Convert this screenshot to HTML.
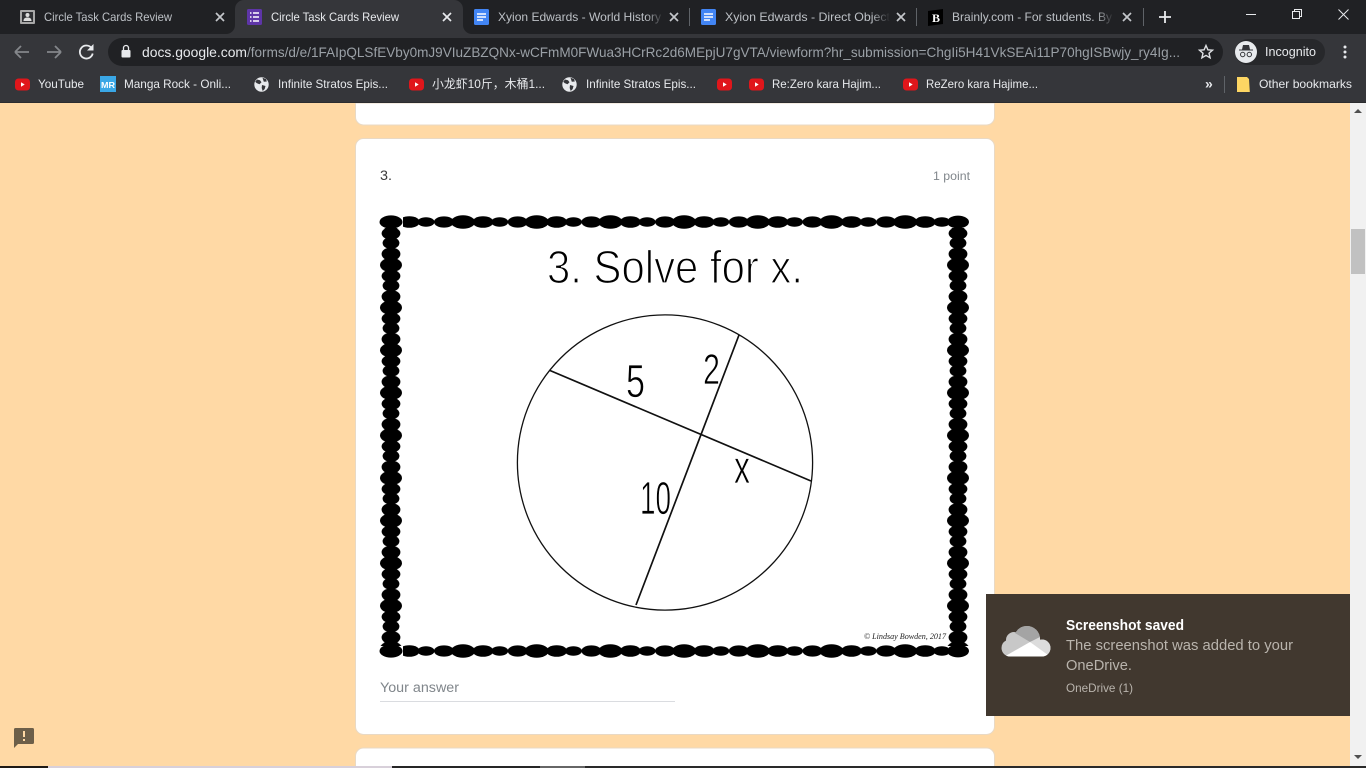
<!DOCTYPE html>
<html lang="en">
<head>
<meta charset="utf-8">
<title>Circle Task Cards Review</title>
<style>
html,body{margin:0;padding:0;width:1366px;height:768px;overflow:hidden;background:#ffd9a5}
svg{display:block;position:absolute;left:0;top:0}
text{font-family:"Liberation Sans","Noto Sans CJK SC",sans-serif;white-space:pre}
.t{font-size:12px;fill:#bdc1c6}
.a{fill:#e8eaed}
.b{font-size:12px;fill:#e8eaed}
.x{stroke:#c4c7cb;stroke-width:1.7;fill:none}
.ax{stroke:#e8eaed}
.w{stroke:#e8eaed;stroke-width:1;fill:none}
</style>
</head>
<body>
<svg width="1366" height="768" viewBox="0 0 1366 768" xmlns="http://www.w3.org/2000/svg">
<defs>
  <g id="yt"><rect x="0" y="0.500" width="15" height="12" rx="3.500" fill="#e0161b"/><path d="M6 4.300v4.400l3.700-2.200z" fill="#fff"/></g>
  <g id="globe"><circle cx="7.500" cy="7.500" r="7.200" fill="#e8eaed"/><path d="M3 2.500l3 .8 1.500 2-2 2-2.800-1.200-1.500-1.300zM8 8l3.500 1-.8 3-2 2-1-3zM8.500 .8l3.500 1.200.8 2.500-3 .3z" fill="#35363a"/></g>
  <g id="doc"><rect x="0" y="0" width="15" height="16" rx="1.500" fill="#4285f4"/><path d="M3 5h9M3 8h9M3 11h6" stroke="#fff" stroke-width="1.400"/></g>
  <pattern id="ph" patternUnits="userSpaceOnUse" x="426" y="0" width="73.7" height="768">
    <ellipse cx="0" cy="222" rx="8.500" ry="4.700"/><ellipse cx="73.7" cy="222" rx="8.500" ry="4.700"/>
    <ellipse cx="18" cy="222" rx="10" ry="5.600"/>
    <ellipse cx="37" cy="222" rx="12" ry="6.800"/>
    <ellipse cx="57" cy="222" rx="10.400" ry="5.800"/>
    <ellipse cx="0" cy="651" rx="8.500" ry="4.700"/><ellipse cx="73.7" cy="651" rx="8.500" ry="4.700"/>
    <ellipse cx="18" cy="651" rx="10" ry="5.600"/>
    <ellipse cx="37" cy="651" rx="12" ry="6.800"/>
    <ellipse cx="57" cy="651" rx="10.400" ry="5.800"/>
  </pattern>
  <pattern id="pv" patternUnits="userSpaceOnUse" x="0" y="243" width="1366" height="42.6">
    <ellipse cx="391" cy="0" rx="8.400" ry="6"/><ellipse cx="391" cy="42.6" rx="8.400" ry="6"/>
    <ellipse cx="391" cy="11" rx="9.400" ry="6.600"/>
    <ellipse cx="391" cy="22" rx="11" ry="7.200"/>
    <ellipse cx="391" cy="33" rx="9.400" ry="6.300"/>
    <ellipse cx="958" cy="0" rx="8.400" ry="6"/><ellipse cx="958" cy="42.6" rx="8.400" ry="6"/>
    <ellipse cx="958" cy="11" rx="9.400" ry="6.600"/>
    <ellipse cx="958" cy="22" rx="11" ry="7.200"/>
    <ellipse cx="958" cy="33" rx="9.400" ry="6.300"/>
  </pattern>
  <linearGradient id="fade"><stop offset="0" stop-color="#202124" stop-opacity="0"/><stop offset="1" stop-color="#202124"/></linearGradient>
  <clipPath id="cloud">
    <circle cx="1027" cy="639" r="13"/>
    <circle cx="1010" cy="648" r="8.500"/>
    <circle cx="1042" cy="648" r="8.500"/>
    <circle cx="1014" cy="640" r="8"/>
    <rect x="1010" y="640" width="32" height="16.500"/>
  </clipPath>
</defs>

<!-- page -->
<rect x="0" y="103" width="1350" height="665" fill="#ffd9a5"/>
<path d="M355.500 103v14a8 8 0 0 0 8 8h623a8 8 0 0 0 8-8v-14z" fill="#fff" stroke="#e9d9c4"/>
<rect x="355.500" y="138.500" width="639" height="596" rx="8" fill="#fff" stroke="#e9d9c4"/>
<path d="M355.500 768v-12a8 8 0 0 1 8-8h623a8 8 0 0 1 8 8v12z" fill="#fff" stroke="#e9d9c4"/>

<text x="380" y="180" style="font-size:14px;fill:#3a3a3a" textLength="12" lengthAdjust="spacingAndGlyphs">3.</text>
<text x="933" y="180" style="font-size:12px;fill:#80868b" textLength="37" lengthAdjust="spacingAndGlyphs">1 point</text>

<!-- question image -->
<rect x="403" y="210" width="545" height="24" fill="url(#ph)"/>
<rect x="403" y="639" width="545" height="24" fill="url(#ph)"/>
<rect x="376" y="228" width="30" height="418" fill="url(#pv)"/>
<rect x="943" y="228" width="30" height="418" fill="url(#pv)"/>
<ellipse cx="391" cy="222" rx="11.500" ry="6.600"/><ellipse cx="958" cy="222" rx="11" ry="6.400"/>
<ellipse cx="391" cy="651" rx="11.500" ry="6.600"/><ellipse cx="958" cy="651" rx="11" ry="6.400"/>

<text x="547" y="283" style="font-size:46px;fill:#000;stroke:#fff;stroke-width:1.300" textLength="256" lengthAdjust="spacingAndGlyphs">3. Solve for x.</text>
<circle cx="665" cy="462.500" r="147.600" fill="none" stroke="#111" stroke-width="1.300"/>
<path d="M550 370.500L811 481M739 335L636 605" fill="none" stroke="#111" stroke-width="1.700"/>
<text x="626" y="397" style="font-size:46px;fill:#000;stroke:#fff;stroke-width:.8" textLength="19" lengthAdjust="spacingAndGlyphs">5</text>
<text x="703" y="384" style="font-size:43px;fill:#000;stroke:#fff;stroke-width:.8" textLength="17" lengthAdjust="spacingAndGlyphs">2</text>
<text x="640" y="514" style="font-size:46px;fill:#000;stroke:#fff;stroke-width:.8" textLength="31" lengthAdjust="spacingAndGlyphs">10</text>
<text x="734" y="483" style="font-size:46px;fill:#000;stroke:#fff;stroke-width:.8" textLength="16" lengthAdjust="spacingAndGlyphs">x</text>
<text x="864" y="639" style="font-size:8px;font-family:'Liberation Serif',serif;font-style:italic;fill:#222" textLength="82" lengthAdjust="spacingAndGlyphs">© Lindsay Bowden, 2017</text>

<text x="380" y="692" style="font-size:13.500px;fill:#80868b" textLength="79" lengthAdjust="spacingAndGlyphs">Your answer</text>
<rect x="380" y="701" width="295" height="1" fill="#dadce0"/>

<!-- feedback -->
<path d="M15.500 728h17a1.500 1.500 0 0 1 1.500 1.500v13a1.500 1.500 0 0 1-1.500 1.500H18l-4 4V729.500a1.500 1.500 0 0 1 1.500-1.500z" fill="#6d5f49"/>
<rect x="23" y="731" width="2" height="6" fill="#ffd9a5"/><rect x="23" y="739" width="2" height="2" fill="#ffd9a5"/>

<!-- scrollbar -->
<rect x="1350" y="103" width="16" height="665" fill="#f1f1f1"/>
<rect x="1351" y="229" width="14" height="45" fill="#c1c1c1"/>
<path d="M1354 113l4-4 4 4z" fill="#505050"/>
<path d="M1354 755l4 4 4-4z" fill="#505050"/>

<!-- notification -->
<rect x="986" y="594" width="364" height="122" fill="#41382f"/>
<g clip-path="url(#cloud)">
  <rect x="1000" y="624" width="52" height="34" fill="#c8c8c8"/>
  <path d="M1011 624h33v12l-14 6-15-9z" fill="#a4a4a4"/>
  <path d="M1030 642l10-5h13v20h-6z" fill="#dcdcdc"/>
  <path d="M1030 642l-28 16h50l-4-3z" fill="#fff"/>
</g>
<text x="1066" y="630" style="font-size:14.500px;font-weight:bold;fill:#fff" textLength="118" lengthAdjust="spacingAndGlyphs">Screenshot saved</text>
<text x="1066" y="650" style="font-size:15px;fill:#b9b4ad" textLength="227" lengthAdjust="spacingAndGlyphs">The screenshot was added to your</text>
<text x="1066" y="670" style="font-size:15px;fill:#b9b4ad" textLength="66" lengthAdjust="spacingAndGlyphs">OneDrive.</text>
<text x="1066" y="692" style="font-size:12px;fill:#b9b4ad" textLength="67" lengthAdjust="spacingAndGlyphs">OneDrive (1)</text>

<!-- taskbar strip -->
<rect x="0" y="766" width="48" height="2" fill="#1e1a16"/>
<rect x="48" y="766" width="344" height="2" fill="#d8d0da"/>
<rect x="392" y="766" width="148" height="2" fill="#262626"/>
<rect x="540" y="766" width="45" height="2" fill="#666"/>
<rect x="585" y="766" width="781" height="2" fill="#2a2a2a"/>

<!-- chrome: tab strip -->
<rect x="0" y="0" width="1366" height="34" fill="#202124"/>
<rect x="0" y="34" width="1366" height="35" fill="#35363a"/>
<rect x="0" y="69" width="1366" height="33" fill="#35363a"/>
<rect x="0" y="102" width="1366" height="1" fill="#2b2c2f"/>
<path d="M226 34a9 9 0 0 0 9-9V9a9 9 0 0 1 9-9h210a9 9 0 0 1 9 9v16a9 9 0 0 0 9 9z" fill="#35363a"/>

<!-- tab 1 -->
<rect x="20" y="10" width="15" height="14" rx="1" fill="#a8a8a8"/>
<rect x="22" y="12" width="11" height="10" fill="#303134"/>
<circle cx="27.500" cy="15" r="2" fill="#ddd"/><path d="M23.500 21c0-3 2-3.500 4-3.500s4 .5 4 3.500z" fill="#ddd"/>
<text class="t" x="44" y="21" textLength="128" lengthAdjust="spacingAndGlyphs">Circle Task Cards Review</text>
<path class="x" d="M216 13l8 8M224 13l-8 8"/>
<!-- tab 2 -->
<rect x="247" y="9" width="15" height="16" rx="1.500" fill="#5e35a8"/>
<path d="M250 13h1.500M253 13h6M250 17h1.500M253 17h6M250 21h1.500M253 21h6" stroke="#fff" stroke-width="1.400"/>
<text class="t a" x="271" y="21" textLength="128" lengthAdjust="spacingAndGlyphs">Circle Task Cards Review</text>
<path class="x ax" d="M443 13l8 8M451 13l-8 8"/>
<!-- tab 3 -->
<use href="#doc" x="474" y="9"/>
<text class="t" x="498" y="21" textLength="163" lengthAdjust="spacingAndGlyphs">Xyion Edwards - World History</text>
<rect x="646" y="5" width="18" height="24" fill="url(#fade)"/>
<path class="x" d="M670 13l8 8M678 13l-8 8"/>
<rect x="689" y="8" width="1" height="18" fill="#5f6368"/>
<!-- tab 4 -->
<use href="#doc" x="701" y="9"/>
<text class="t" x="725" y="21" textLength="165" lengthAdjust="spacingAndGlyphs">Xyion Edwards - Direct Object</text>
<rect x="872" y="5" width="18" height="24" fill="url(#fade)"/>
<path class="x" d="M897 13l8 8M905 13l-8 8"/>
<rect x="916" y="8" width="1" height="18" fill="#5f6368"/>
<!-- tab 5 -->
<path d="M928 11l15-2v15l-15 2z" fill="#000"/>
<text x="932" y="22" style="font-size:12px;font-weight:bold;font-family:'Liberation Serif',serif;fill:#fff">B</text>
<text class="t" x="952" y="21" textLength="160" lengthAdjust="spacingAndGlyphs">Brainly.com - For students. By</text>
<rect x="1096" y="5" width="18" height="24" fill="url(#fade)"/>
<path class="x" d="M1123 13l8 8M1131 13l-8 8"/>
<rect x="1143" y="8" width="1" height="18" fill="#5f6368"/>
<path d="M1165 11v12M1159 17h12" stroke="#e8eaed" stroke-width="1.800" fill="none"/>

<!-- window controls -->
<path class="w" d="M1246 14.500h10"/>
<path class="w" d="M1292.500 11.500h7v7h-7zM1294.500 11.500v-2h7v7h-2"/>
<path class="w" d="M1338.500 9.500l10 10M1348.500 9.500l-10 10"/>

<!-- toolbar -->
<path d="M15 52h14M15 52l6-6M15 52l6 6" stroke="#84878b" stroke-width="1.800" fill="none"/>
<path d="M61 52H47M61 52l-6-6M61 52l-6 6" stroke="#84878b" stroke-width="1.800" fill="none"/>
<path d="M91.500 48a6.500 6.500 0 1 0 1.200 5.500" stroke="#e8eaed" stroke-width="1.800" fill="none"/>
<path d="M93.500 44v6.500H87z" fill="#e8eaed"/>
<rect x="108" y="38" width="1115" height="28" rx="14" fill="#202124"/>
<rect x="121.500" y="50" width="9" height="7.500" rx="1" fill="#e8eaed"/>
<path d="M123.500 50v-2a2 2 0 0 1 5 0v2" stroke="#e8eaed" stroke-width="1.300" fill="none"/>
<text x="142" y="57" style="font-size:14px;fill:#e8eaed" textLength="105" lengthAdjust="spacingAndGlyphs">docs.google.com</text>
<text x="247" y="57" style="font-size:14px;fill:#9aa0a6" textLength="933" lengthAdjust="spacingAndGlyphs">/forms/d/e/1FAIpQLSfEVby0mJ9VIuZBZQNx-wCFmM0FWua3HCrRc2d6MEpjU7gVTA/viewform?hr_submission=ChgIi5H41VkSEAi11P70hgISBwjy_ry4Ig...</text>
<path d="M1206 45.500l1.900 4.300 4.600.4-3.500 3 1.100 4.600-4.100-2.400-4.100 2.400 1.100-4.600-3.500-3 4.600-.4z" fill="none" stroke="#dfe1e4" stroke-width="1.400"/>
<rect x="1235" y="39" width="90" height="26" rx="13" fill="#27282b"/>
<circle cx="1246" cy="52" r="11" fill="#e8eaed"/>
<path d="M1239 49.500h14v1h-14zM1242 49.500l1-4.500h6l1 4.500z" fill="#35363a"/>
<circle cx="1242.700" cy="54.500" r="2.200" fill="none" stroke="#35363a" stroke-width="1"/>
<circle cx="1249.300" cy="54.500" r="2.200" fill="none" stroke="#35363a" stroke-width="1"/>
<text x="1265" y="56" style="font-size:13px;fill:#e8eaed" textLength="51" lengthAdjust="spacingAndGlyphs">Incognito</text>
<circle cx="1345" cy="47" r="1.500" fill="#e8eaed"/><circle cx="1345" cy="52" r="1.500" fill="#e8eaed"/><circle cx="1345" cy="57" r="1.500" fill="#e8eaed"/>

<!-- bookmarks -->
<use href="#yt" x="15" y="78"/>
<text class="b" x="38" y="88" textLength="46" lengthAdjust="spacingAndGlyphs">YouTube</text>
<rect x="100" y="76" width="16" height="16" fill="#3aa7e6"/>
<text x="101" y="88" style="font-size:8px;font-weight:bold;fill:#fff" textLength="14" lengthAdjust="spacingAndGlyphs">MR</text>
<text class="b" x="124" y="88" textLength="107" lengthAdjust="spacingAndGlyphs">Manga Rock - Onli...</text>
<use href="#globe" x="254" y="77"/>
<text class="b" x="278" y="88" textLength="110" lengthAdjust="spacingAndGlyphs">Infinite Stratos Epis...</text>
<use href="#yt" x="409" y="78"/>
<text class="b" x="432" y="88" textLength="113" lengthAdjust="spacingAndGlyphs">小龙虾10斤，木桶1...</text>
<use href="#globe" x="562" y="77"/>
<text class="b" x="586" y="88" textLength="110" lengthAdjust="spacingAndGlyphs">Infinite Stratos Epis...</text>
<use href="#yt" x="717" y="78"/>
<use href="#yt" x="749" y="78"/>
<text class="b" x="772" y="88" textLength="109" lengthAdjust="spacingAndGlyphs">Re:Zero kara Hajim...</text>
<use href="#yt" x="903" y="78"/>
<text class="b" x="926" y="88" textLength="112" lengthAdjust="spacingAndGlyphs">ReZero kara Hajime...</text>
<text x="1205" y="88.500" style="font-size:14px;font-weight:bold;fill:#e8eaed">»</text>
<rect x="1224" y="76" width="1" height="17" fill="#5f6368"/>
<path d="M1237 77h10l2 2 .800 13h-12.800z" fill="#fdd663"/>
<text class="b" x="1259" y="88" textLength="93" lengthAdjust="spacingAndGlyphs">Other bookmarks</text>
</svg>
</body>
</html>
